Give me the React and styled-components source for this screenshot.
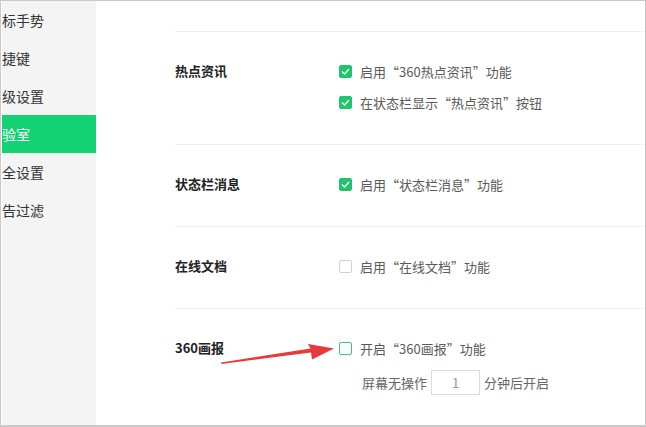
import React from 'react';
import styled, { createGlobalStyle } from 'styled-components';

const Global = createGlobalStyle`
  body {
    margin: 0;
    font-family: "Noto Sans CJK SC", "Noto Sans", sans-serif;
  }
`;

const Frame = styled.div`
  position: relative;
  width: 646px;
  height: 427px;
  box-sizing: border-box;
  border: 1px solid #c9c9c9;
  border-bottom-width: 2px;
  display: flex;
  overflow: hidden;
  background: #fff;
`;

const Sidebar = styled.div`
  width: 94px;
  margin-left: 1px;
  background: #f4f4f4;
  flex-shrink: 0;
`;

const NavItem = styled.div`
  height: 38px;
  line-height: 38px;
  font-size: 14px;
  white-space: nowrap;
  color: ${p => (p.active ? '#fff' : '#333')};
  background: ${p => (p.active ? '#12d274' : 'transparent')};
`;

const Main = styled.div`
  flex: 1;
  padding: 30px 0 0 79px;
`;

const Section = styled.div`
  display: flex;
  border-top: 1px solid #efefef;
  padding: 29px 0 32px;
`;

const Label = styled.div`
  width: 164px;
  flex-shrink: 0;
  font-size: 13px;
  font-weight: bold;
  line-height: 20px;
  color: #222;
`;

const Options = styled.div`
  display: flex;
  flex-direction: column;
  gap: 11px;
`;

const Option = styled.label`
  display: flex;
  align-items: center;
  height: 20px;
  gap: 8px;
  font-size: 13px;
  color: #5a5a5a;
`;

const Box = styled.span`
  width: 13px;
  height: 13px;
  box-sizing: border-box;
  border-radius: 2px;
  display: flex;
  align-items: center;
  justify-content: center;
  background: ${p => (p.checked ? '#1fc56c' : '#fff')};
  border: 1px solid ${p => (p.checked ? '#1fc56c' : p.focus ? '#3cc47c' : '#cfcfcf')};
`;

const Delay = styled.div`
  display: flex;
  align-items: center;
  gap: 4px;
  margin-left: 23px;
  font-size: 13px;
  color: #666;
  margin-top: 1px;
`;

const NumInput = styled.div`
  width: 49px;
  height: 25px;
  box-sizing: border-box;
  border: 1px solid #dcdcdc;
  display: flex;
  align-items: center;
  justify-content: center;
  color: #999;
  font-size: 13px;
`;

const Overlay = styled.svg`
  position: absolute;
  left: 0;
  top: 0;
  pointer-events: none;
`;

const Check = ({ checked, focus }) => (
  <Box checked={checked} focus={focus}>
    {checked && (
      <svg width="9" height="7" viewBox="0 0 9 7">
        <path d="M1 3.5 L3.5 6 L8 1" fill="none" stroke="#fff" strokeWidth="1.4" />
      </svg>
    )}
  </Box>
);

const nav = ['标手势', '捷键', '级设置', '验室', '全设置', '告过滤'];

export default function App() {
  return (
    <>
      <Global />
      <Frame>
        <Sidebar>
          {nav.map(n => (
            <NavItem key={n} active={n === '验室'}>{n}</NavItem>
          ))}
        </Sidebar>
        <Main>
          <Section>
            <Label>热点资讯</Label>
            <Options>
              <Option><Check checked />启用“360热点资讯”功能</Option>
              <Option><Check checked />在状态栏显示“热点资讯”按钮</Option>
            </Options>
          </Section>
          <Section>
            <Label>状态栏消息</Label>
            <Options>
              <Option><Check checked />启用“状态栏消息”功能</Option>
            </Options>
          </Section>
          <Section>
            <Label>在线文档</Label>
            <Options>
              <Option><Check />启用“在线文档”功能</Option>
            </Options>
          </Section>
          <Section>
            <Label>360画报</Label>
            <Options>
              <Option><Check focus />开启“360画报”功能</Option>
              <Delay>
                屏幕无操作
                <NumInput>1</NumInput>
                分钟后开启
              </Delay>
            </Options>
          </Section>
        </Main>
        <Overlay width="646" height="427">
          <polygon
            points="220,361.4 309.5,347.6 307,343 333,347.5 311,358.5 310,351.6 220.3,363"
            fill="#e8393b"
          />
        </Overlay>
      </Frame>
    </>
  );
}
